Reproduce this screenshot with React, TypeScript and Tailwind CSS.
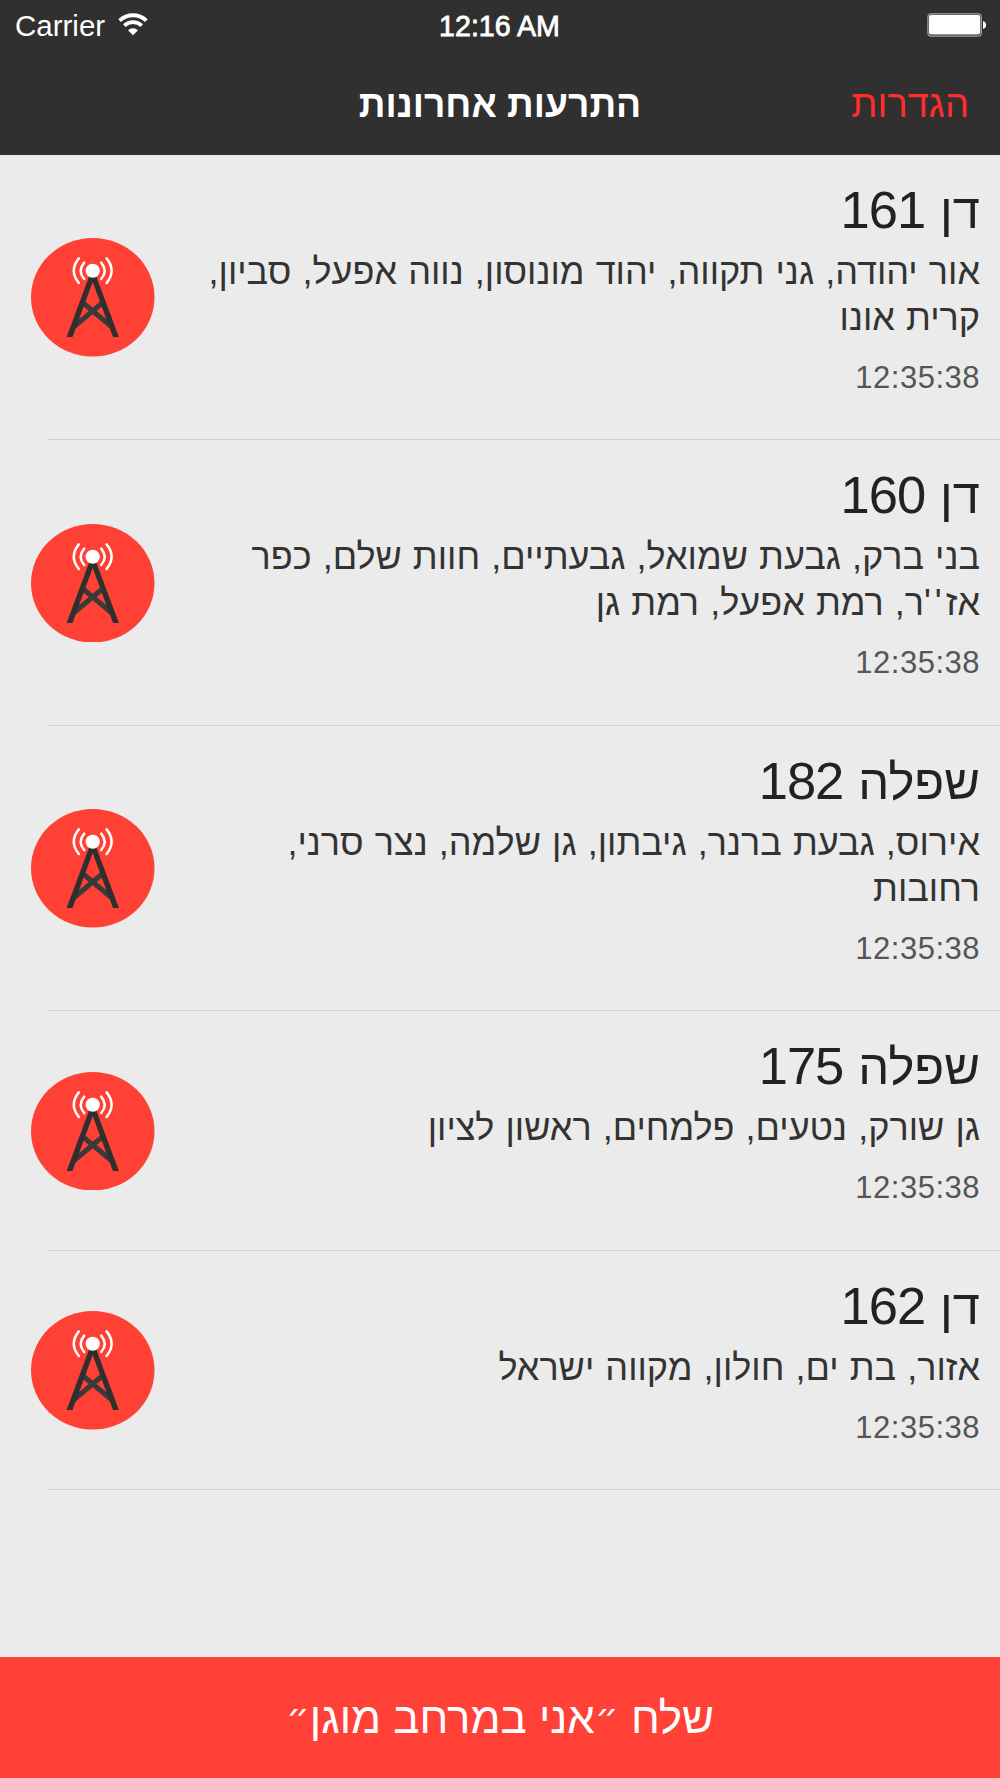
import { Fragment } from "react";

interface Alert {
  region: string;
  code: string;
  cities: string[];
  time: string;
}

const alerts: Alert[] = [
  {
    region: "דן",
    code: "161",
    cities: ["אור יהודה, גני תקווה, יהוד מונוסון, נווה אפעל, סביון,", "קרית אונו"],
    time: "12:35:38",
  },
  {
    region: "דן",
    code: "160",
    cities: ["בני ברק, גבעת שמואל, גבעתיים, חוות שלם, כפר", "אז''ר, רמת אפעל, רמת גן"],
    time: "12:35:38",
  },
  {
    region: "שפלה",
    code: "182",
    cities: ["אירוס, גבעת ברנר, גיבתון, גן שלמה, נצר סרני,", "רחובות"],
    time: "12:35:38",
  },
  {
    region: "שפלה",
    code: "175",
    cities: ["גן שורק, נטעים, פלמחים, ראשון לציון"],
    time: "12:35:38",
  },
  {
    region: "דן",
    code: "162",
    cities: ["אזור, בת ים, חולון, מקווה ישראל"],
    time: "12:35:38",
  },
];

const WifiIcon = () => (
  <svg className="h-[23px] w-[30px]" viewBox="0 0 30 23" fill="none" stroke="white" strokeWidth="3.8">
    <path d="M1.6 7.6a19.5 19.5 0 0 1 26.8 0" />
    <path d="M6.3 12.6a12.6 12.6 0 0 1 17.4 0" strokeWidth="3.6" />
    <path d="M10 17.2a7.4 7.4 0 0 1 10 0L15 22.2z" fill="white" stroke="none" />
  </svg>
);

const BatteryIcon = () => (
  <svg className="h-6 w-[60px]" viewBox="0 0 60 24">
    <rect x="0.9" y="0.9" width="53.4" height="22.2" rx="3.4" fill="none" stroke="#a3a3a3" strokeWidth="1.2" />
    <rect x="2" y="2" width="51.2" height="19.6" rx="2.4" fill="white" />
    <path d="M56 8c4.2 1.2 4.2 6.8 0 8z" fill="white" />
  </svg>
);

const TowerIcon = () => (
  <svg className="h-[118.5px] w-[123.5px] shrink-0" viewBox="0 0 123.5 118.5" fill="none">
    <ellipse cx="61.75" cy="59.25" rx="61.75" ry="59.25" fill="#ff4135" />
    <g stroke="#3b3a39" strokeWidth="5">
      <path d="M51 64 81.5 89.5" />
      <path d="M72.4 64 41.9 89.5" />
    </g>
    <g fill="#2f2f2f">
      <path d="M58.3 38h5.6L41.5 99h-5.9z" />
      <path d="M59.5 38h5.6L87.9 99h-5.9z" />
    </g>
    <g stroke="white" strokeWidth="2.5" strokeLinecap="round">
      <path d="M53.2 24.6q-7 8.2 0 16.4" />
      <path d="M70.2 24.6q7 8.2 0 16.4" />
      <path d="M47.8 20.4q-10 12.3 0 24.6" />
      <path d="M75.6 20.4q10 12.3 0 24.6" />
    </g>
    <ellipse cx="61.7" cy="32.7" rx="7.2" ry="7" fill="white" />
  </svg>
);

const StatusBar = () => (
  <div className="grid h-[50px] grid-cols-3 items-start pr-[13px] pl-[15px] text-white">
    <div className="flex items-start gap-[13px]">
      <span className="pt-[9px] text-[29.5px] leading-[34px]">Carrier</span>
      <span className="pt-[13px]">
        <WifiIcon />
      </span>
    </div>
    <span className="pt-[9px] pr-[3px] text-center text-[28.6px] leading-[34px] whitespace-nowrap [-webkit-text-stroke:0.8px_white]">
      12:16 AM
    </span>
    <div className="flex justify-end pt-[13px]">
      <BatteryIcon />
    </div>
  </div>
);

const NavBar = () => (
  <div dir="rtl" className="grid flex-1 grid-cols-3 items-start px-[31px] pt-[33px] whitespace-nowrap">
    <button className="justify-self-start text-[38px] leading-[42px] text-[#ff2d2d]">הגדרות</button>
    <h1 className="justify-self-center text-[37.2px] leading-[42px] font-bold text-white">התרעות אחרונות</h1>
  </div>
);

const CityLine = ({ text }: { text: string }) => (
  <p>
    {text.split("''").map((part, i) => (
      <Fragment key={part}>
        {i > 0 && <span className="tracking-[4px]">''</span>}
        {part}
      </Fragment>
    ))}
  </p>
);

const AlertRow = ({ alert }: { alert: Alert }) => (
  <li className="relative flex items-center pl-[31px]">
    <TowerIcon />
    <div dir="rtl" className="flex-1 pt-[25px] pr-[20px] pb-[44.5px] whitespace-nowrap">
      <h2 className="flex h-[60px] items-baseline gap-[15px] leading-[60px] text-[#222]">
        <span className="text-[49px]">{alert.region}</span>
        <span className="text-[52.5px] tracking-[-1px]">{alert.code}</span>
      </h2>
      <div className="mt-[9px] text-[36px] leading-[46px] text-[#333] [word-spacing:1.1px]">
        {alert.cities.map((line) => (
          <CityLine key={line} text={line} />
        ))}
      </div>
      <p className="mt-[19px] text-[31px] leading-[36px] tracking-[0.5px] text-[#555]">{alert.time}</p>
    </div>
    <span className="absolute right-0 bottom-0 left-[48px] h-px bg-[#cfcfd1]" />
  </li>
);

const Gershayim = () => (
  <span className="align-[4px] font-['DejaVu_Sans'] text-[37px] leading-none">״</span>
);

export default function App() {
  return (
    <div className="flex h-[1778px] w-[1000px] flex-col overflow-hidden bg-[#ebebeb] font-['Liberation_Sans',Arial,sans-serif]">
      <header className="flex h-[154.5px] flex-col bg-[#303030]">
        <StatusBar />
        <NavBar />
      </header>
      <ul className="flex-1">
        {alerts.map((alert) => (
          <AlertRow key={alert.code} alert={alert} />
        ))}
      </ul>
      <button
        dir="rtl"
        className="h-[121px] bg-[#ff4138] text-center text-[43.8px] leading-[121px] text-white"
      >
        שלח <Gershayim />
        אני במרחב מוגן
        <Gershayim />
      </button>
    </div>
  );
}
